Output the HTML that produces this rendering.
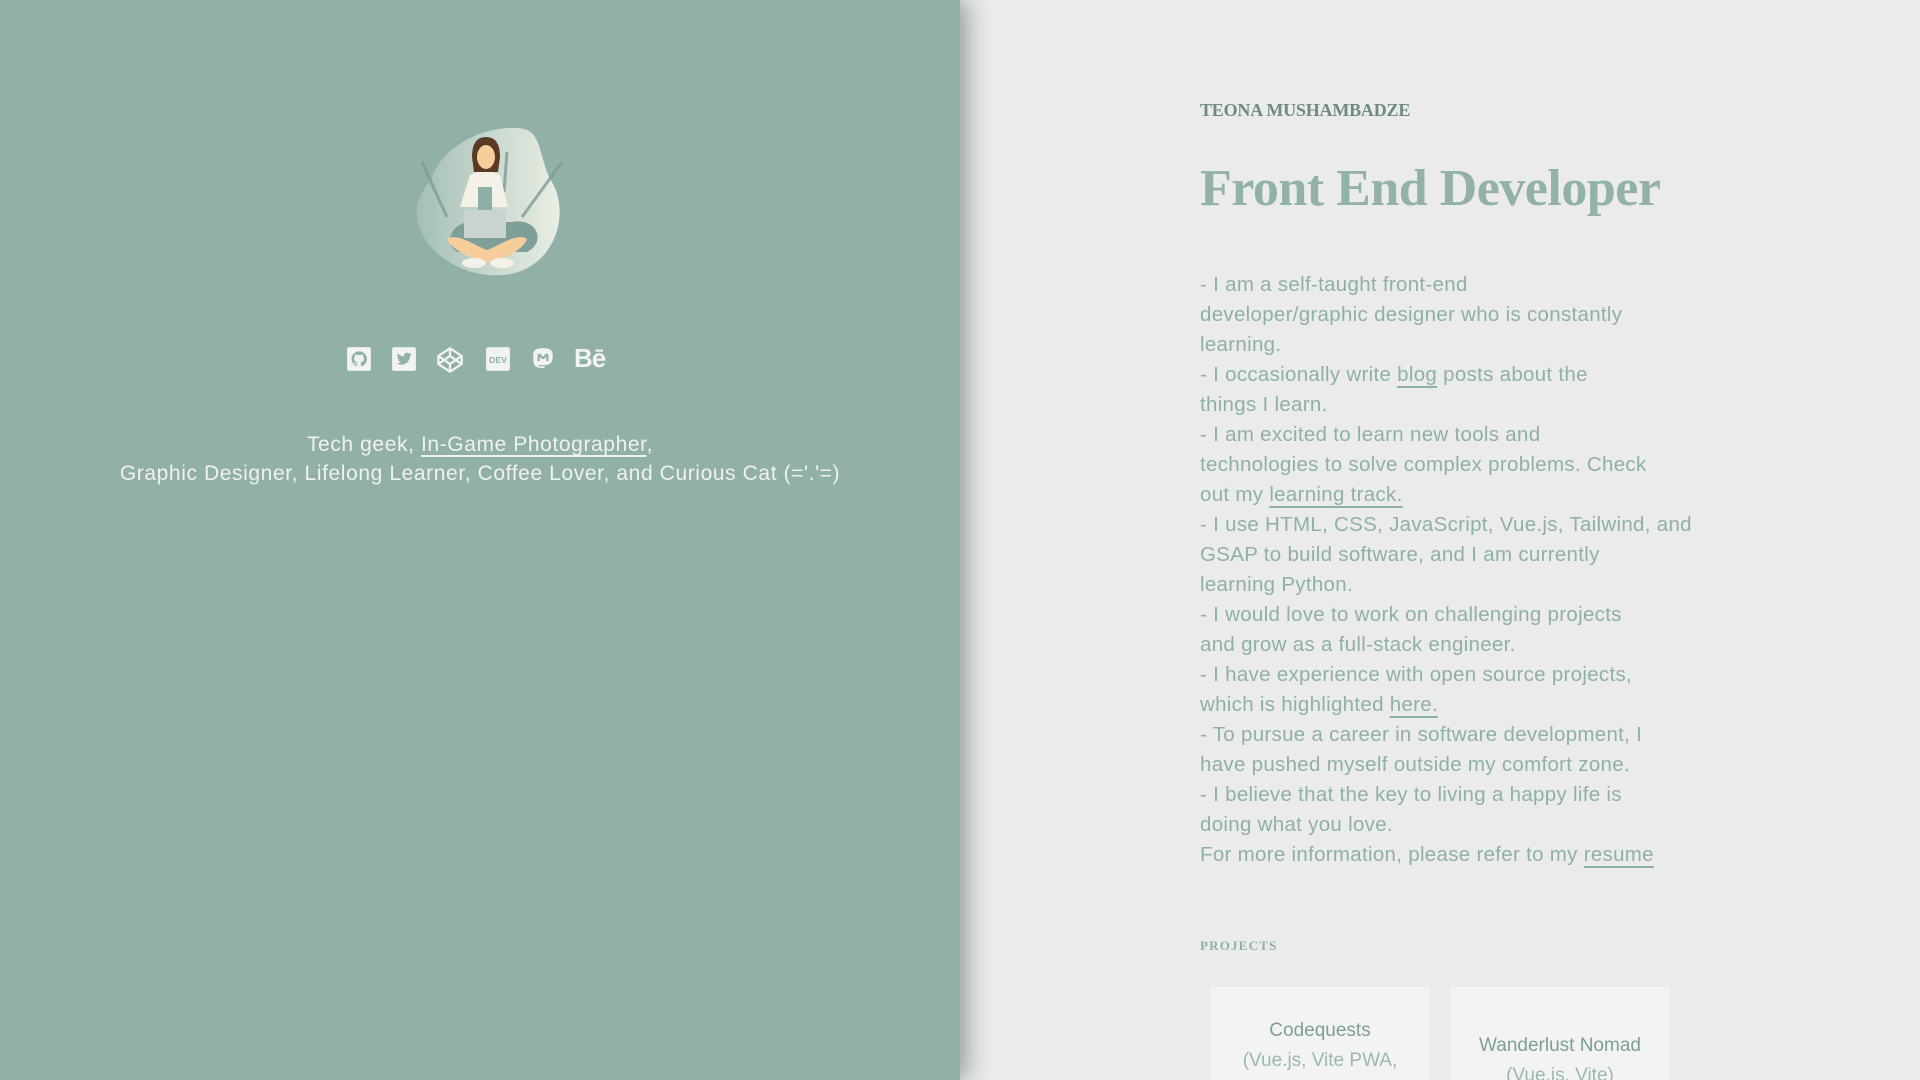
<!DOCTYPE html>
<html><head><meta charset="utf-8"><style>
*{margin:0;padding:0;box-sizing:border-box}
html,body{width:1920px;height:1080px;overflow:hidden;background:#ebebeb;font-family:"Liberation Sans",sans-serif}
#wrap{position:relative;width:1920px;height:1080px;overflow:hidden;background:#ebebeb}
.left{position:absolute;left:0;top:0;width:960px;height:1080px;background:#91b0a7;box-shadow:8px 0 22px rgba(60,70,80,.45);z-index:2}
.avatar{position:absolute;left:412px;top:122px}
.icons{position:absolute;top:346px;left:0;width:960px;height:30px}
.icons svg{position:absolute;top:0}
.intro{position:absolute;top:430px;left:0;width:960px;text-align:center;color:#f1f1ee;font-size:21px;line-height:29px;letter-spacing:.6px}
.intro u{text-decoration:underline;text-underline-offset:4px}
.right{position:absolute;left:1200px;top:0;color:#8fb0a6}
.name{position:absolute;top:100px;left:0;white-space:nowrap;font-family:"Liberation Serif",serif;font-weight:bold;font-size:18px;color:#6f8a84;letter-spacing:-.2px}
h1{position:absolute;top:159px;left:0;white-space:nowrap;font-family:"Liberation Serif",serif;font-weight:bold;font-size:52px;color:#92b1a7;letter-spacing:-.5px}
.p{position:absolute;top:270px;left:0;white-space:nowrap;font-size:20.5px;line-height:30px;color:#8fb0a6;letter-spacing:.3px}
.p u{text-underline-offset:5px}
.proj{position:absolute;top:938px;left:0;font-family:"Liberation Serif",serif;font-weight:bold;font-size:13px;letter-spacing:1.2px;color:#8fb0a6}
.card{position:absolute;top:987px;width:220px;height:120px;background:#f3f3f3;border-radius:3px;text-align:center;line-height:30px}
.card b{display:block;font-size:19px;font-weight:normal;color:#7e9f96}
.card span{font-size:19px;color:#9bb8af}
</style></head><body><div id="wrap">
<div class="left">
 <svg class="avatar" width="160" height="160" viewBox="0 0 160 160">
  <defs><linearGradient id="g" x1="0" x2="1"><stop offset="0" stop-color="#a3bfb5"/><stop offset="1" stop-color="#eaeee4"/></linearGradient></defs>
  <path d="M20 55 C35 15 90 0 115 8 C130 14 128 40 140 60 C160 95 140 150 90 153 C50 156 10 130 5 95 C2 80 12 68 20 55Z" fill="url(#g)"/>
  <g stroke="#7f9c97" stroke-width="3" fill="none" opacity=".8"><path d="M10 40 L35 95"/><path d="M150 40 L110 95"/><path d="M95 30 L92 70"/></g>
  <path d="M45 130 C30 120 40 95 70 100 L100 100 C125 95 135 120 115 130Z" fill="#7fa098"/>
  <path d="M58 53 Q72 45 88 53 L96 85 L48 85Z" fill="#f4f1e8"/>
  <rect x="66" y="65" width="14" height="25" fill="#8db0a6"/>
  <path d="M35 117 C40 130 70 140 75 140 C85 140 110 130 115 117 C105 110 85 125 75 128 C65 125 45 110 35 117Z" fill="#f8cd9c"/>
  <rect x="52" y="88" width="42" height="28" fill="#c9d4d2"/>
  <ellipse cx="62" cy="141" rx="12" ry="5" fill="#f4f1e8"/><ellipse cx="90" cy="141" rx="12" ry="5" fill="#f4f1e8"/>
  <path d="M60 35 Q60 15 74 15 Q88 15 88 35 L86 50 L62 50Z" fill="#5b3a24"/>
  <ellipse cx="74" cy="35" rx="9" ry="12" fill="#f8cd9c"/>
 </svg>
 <div class="icons">
  <svg style="left:346px" width="26" height="26" viewBox="0 0 24 24"><rect x="1" y="1" width="22" height="22" rx="2" fill="#f2f2f0"/><path d="M12 5a7 7 0 0 0-2.2 13.6c.4 0 .5-.2.5-.4v-1.3c-2 .4-2.4-.9-2.4-.9-.3-.8-.8-1-.8-1-.6-.4.1-.4.1-.4.7 0 1.1.7 1.1.7.6 1.100 1.7.8 2 .6.1-.4.3-.8.5-.9-1.6-.2-3.2-.8-3.2-3.5 0-.8.3-1.4.7-1.900-.1-.2-.3-.9.1-1.9 0 0 .6-.2 1.9.7a6.5 6.5 0 0 1 3.5 0c1.3-.9 1.9-.7 1.9-.7.4 1 .2 1.7.1 1.9.4.5.7 1.1.7 1.9 0 2.7-1.6 3.3-3.2 3.5.3.2.5.7.5 1.3v2c0 .2.1.4.5.4A7 7 0 0 0 12 5z" fill="#91b0a7"/></svg>
  <svg style="left:391px" width="26" height="26" viewBox="0 0 24 24"><rect x="1" y="1" width="22" height="22" rx="2" fill="#f2f2f0"/><path d="M19 7.5c-.5.2-1 .4-1.6.4.6-.3 1-.9 1.2-1.5-.5.3-1.1.5-1.8.7a2.8 2.8 0 0 0-4.8 2.5c-2.3-.1-4.4-1.2-5.8-2.9-.8 1.3-.4 2.9.9 3.7-.5 0-.9-.1-1.3-.3 0 1.4 1 2.6 2.3 2.8-.4.1-.9.1-1.300 0 .4 1.1 1.4 1.9 2.6 2a5.6 5.6 0 0 1-4.1 1.1c5.5 3.3 12.2-.3 12.1-6.6.6-.4 1.1-.9 1.4-1.5z" fill="#91b0a7"/></svg>
  <svg style="left:436px" width="28" height="28" viewBox="0 0 24 24" fill="none" stroke="#f2f2f0" stroke-width="2" stroke-linejoin="round"><path d="M12 2L22 8.5V15.5L12 22L2 15.5V8.5Z"/><path d="M12 2V8.5M12 15.5V22M2 8.5L12 15.5L22 8.5M2 15.5L12 8.5L22 15.5"/></svg>
  <svg style="left:485px" width="26" height="26" viewBox="0 0 24 24"><rect x="1" y="1" width="22" height="22" rx="2" fill="#f2f2f0"/><text x="12" y="15.5" text-anchor="middle" font-family="Liberation Sans" font-weight="bold" font-size="8" fill="#91b0a7">DEV</text></svg>
  <svg style="left:530px" width="26" height="26" viewBox="0 0 24 24"><path d="M21 8c0-4-3-5-3-5-1.5-.7-4-1-6-1s-4.5.3-6 1c0 0-3 1-3 5v4c0 5 1 7 5 8 2 .5 4 .5 5.5 0v-1.5s-2 .6-4 .4c-2 0-2-1.5-2-1.5 2 .5 5 .5 7 .2 3-.4 5.5-2 6-4.5.3-1.5.5-3 .5-5z" fill="#f2f2f0"/><path d="M17 14V9c0-2-2-2.5-2.7-1.5L12 10 9.7 7.5C9 6.5 7 7 7 9v5h2V9.5l2 2.5h2l2-2.5V14z" fill="#91b0a7"/></svg>
  <div style="position:absolute;left:574px;top:-3px;color:#f2f2f0;font-weight:bold;font-size:26px;letter-spacing:-1px">Bē</div>
 </div>
 <div class="intro">Tech geek, <u>In-Game Photographer</u>,<br>Graphic Designer, Lifelong Learner, Coffee Lover, and Curious Cat (='.'=)</div>
</div>
<div class="right">
 <div class="name">TEONA MUSHAMBADZE</div>
 <h1>Front End Developer</h1>
 <div class="p">- I am a self-taught front-end<br>developer/graphic designer who is constantly<br>learning.<br>- I occasionally write <u>blog</u> posts about the<br>things I learn.<br>- I am excited to learn new tools and<br>technologies to solve complex problems. Check<br>out my <u>learning track.</u><br>- I use HTML, CSS, JavaScript, Vue.js, Tailwind, and<br>GSAP to build software, and I am currently<br>learning Python.<br>- I would love to work on challenging projects<br>and grow as a full-stack engineer.<br>- I have experience with open source projects,<br>which is highlighted <u>here.</u><br>- To pursue a career in software development, I<br>have pushed myself outside my comfort zone.<br>- I believe that the key to living a happy life is<br>doing what you love.<br>For more information, please refer to my <u>resume</u></div>
 <div class="proj">PROJECTS</div>
</div>
<div class="card" style="left:1210px;padding-top:29px"><b>Codequests</b><span>(Vue.js, Vite PWA,<br>Firebase)</span></div>
<div class="card" style="left:1450px;padding-top:44px"><b>Wanderlust Nomad</b><span>(Vue.js, Vite)</span></div>
</div></body></html>
